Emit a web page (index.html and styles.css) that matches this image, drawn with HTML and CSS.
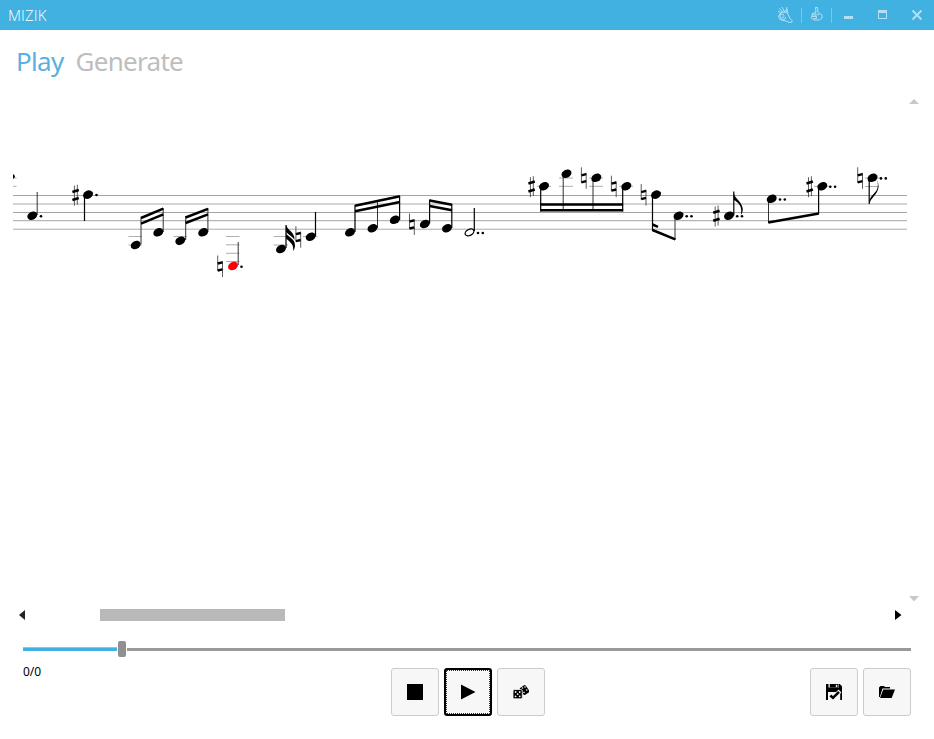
FILE: index.html
```html
<!DOCTYPE html>
<html lang="en">
<head>
<meta charset="utf-8">
<title>MIZIK</title>
<link rel="stylesheet" href="styles.css">
</head>
<body>
<div class="window">
  <header class="titlebar">
    <span class="app-name">MIZIK</span>
    <div class="commands">
      <svg class="cmd" width="30" height="30" viewBox="0 0 30 30"><g fill="none" stroke="currentColor" stroke-width="1"><path d="M8 8.500l4 3.500M11 7l2.500 5M16 7l-1 5M7 11.500l4 1M8 14.500l4-2.500 4 .5 3 6 2 2v1.500l-2 .5-6-2-4-1-1.500-2.500 1-3"/><circle cx="11" cy="16" r="2"/><path d="M9 19l4 1 2-3M13 12l3-3 1 4"/></g></svg>
      <i class="sep"></i>
      <svg class="cmd" width="29" height="30" viewBox="0 0 29 30"><path fill="none" stroke="currentColor" d="M13.500 7.500l.5 5-3.500 1-.5 2-.5 2.500 2 2h6l2.500-2v-3l-4-2.500-.5-5zM10 14h4v2h-4M10.500 16.500h4v2h-3M15 14l2 1"/></svg>
      <i class="sep"></i>
      <svg width="102" height="30" viewBox="0 0 102 30"><path fill="currentColor" d="M12 16h9v3h-9zM46 10h9v9h-9zM47 13v5h7v-5z" fill-rule="evenodd"/><path d="M80.500 10.500l9 9m0-9l-9 9" stroke="currentColor" stroke-width="2"/></svg>
    </div>
  </header>
  <nav class="tabs"><a class="tab active">Play</a><a class="tab">Generate</a></nav>
  <main class="score">
    <svg class="sheet" width="894" height="510" viewBox="13 95 894 510">
      <defs>
        <ellipse id="n" rx="5.200" ry="4" transform="rotate(-27)"/>
        <g id="sh"><path d="M-1.300-9v20M1.600-10v20" stroke="#333" stroke-width=".8"/><path d="M-3.300-2.700l6.400-2M-3.300 5.300l6.400-2" stroke="#000" stroke-width="2.500"/></g>
        <g id="na"><path d="M-2.300-10.500v15.500M2.500-5v16" stroke="#333" stroke-width=".8"/><path d="M-2.300-2.500l4.800-1.200M-2.300 4.500l4.800-1.200" stroke="#000" stroke-width="2.400"/></g>
        <g id="dd"><circle r="1.300"/><circle cx="4.800" r="1.300"/></g>
      </defs>
      <g class="staff"><path d="M13 195.500h894M13 212.500h894"/><path class="soft" d="M13 204h894M13 229.200h894"/><path d="M13 220.700h894"/></g>
      <path class="ledger" d="M13 178h3.500M13 186.300h3.500M128.500 236.500h13.500M128.500 245h13.500M173.500 236.500h13.500M226 236.500h13.500M226 244.800h13.500M226 253.300h13.500M226 261.500h13.500M273.500 236.500h14.500M273.500 245h14.500M303 236.500h14.500M537 186.300h14M559 178h14M559 186.300h14M589 178h14M589 186.300h14M619 186.300h14M814 186.300h15M865 178h15M865 186.500h14"/>
      <path class="stem thin" d="M37.200 192v23M141 217v27M163.200 208v24M185.700 216v24M207.900 208v24M238.200 242v23M377.500 200v28M563.200 174v37M593 178v33M675 216v24M768.500 199v24"/>
      <path class="stem" d="M84.500 195v26M286 225v23M315.500 212v24M355 205v27M399.600 196v24M429.600 199.500v24M451.800 204v24M474.300 208v23M540.700 186v25.500M622.700 186v25.500M652.500 195v36M733.800 191.500v24M818.600 186v28M869.200 178v26"/>
      <path class="beam" d="M141 218l22.300-9.300M141 223.700l22.300-9.300M185.600 217.500l22.400-8.700M185.600 223l22.400-8.700M355 205.700l45-9.500M355 211.300l45-9.300M429.600 200.500l22.400 4.200M429.600 205.900l22.400 4.400M540.300 204.500h82.800M540.300 210.300h82.800M652.500 230l22.800 9.300M652.500 224.500l5.500 2.300M768.300 222.500l50.500-9"/>
      <g class="flags"><path d="M286 225c2 6 9 7 8.500 15-1-3-6-5-8.500-8z"/><path d="M286 233.500c3 4 9 5 9 12 0 2.500-1 4.500-2 5.500 1.500-6-3-9-7-12.500z"/><path d="M733.800 193c1 6 8 8 9 16 0 3-1 5-2 6 2-9-3-13-7-15z"/><path d="M869.200 203c0-7 6-9 8-14 1-3 1-6-.5-9 3 5 2 10-1 14-2 3-5 5-6 9z"/></g>
      <g>
        <use href="#n" x="32.300" y="215.700"/><use href="#n" x="88" y="194.600"/><use href="#n" x="135.700" y="245"/><use href="#n" x="158.300" y="232.300"/><use href="#n" x="180.300" y="240.700"/><use href="#n" x="203.200" y="232.300"/><use class="playing" href="#n" x="233" y="266"/><use href="#n" x="281" y="249"/><use href="#n" x="310.700" y="236.700"/><use href="#n" x="350" y="232.300"/><use href="#n" x="372.500" y="228.200"/><use href="#n" x="394.800" y="219.800"/><use href="#n" x="424.800" y="224"/><use href="#n" x="447" y="228.200"/><use href="#n" x="544" y="186.200"/><use href="#n" x="566.500" y="173.700"/><use href="#n" x="596.300" y="177.800"/><use href="#n" x="626.300" y="186.200"/><use href="#n" x="656" y="194.600"/><use href="#n" x="678.500" y="215.700"/><use href="#n" x="729" y="215.700"/><use href="#n" x="771.700" y="198.800"/><use href="#n" x="822.300" y="186.200"/><use href="#n" x="872.500" y="177.800"/>
        <ellipse cx="469.500" cy="232.400" rx="4.700" ry="3" class="half" transform="rotate(-27 469.500 232.400)"/>
        <path d="M13 174q2 1 2 3l-2 2z"/>
      </g>
      <use href="#sh" x="75.700" y="194.700"/><use href="#sh" x="531.700" y="186.200"/><use href="#sh" x="716.500" y="215.500"/><use href="#sh" x="809.800" y="186.200"/>
      <use href="#na" x="220" y="266"/><use href="#na" x="298.200" y="236.700"/><use href="#na" x="411.800" y="224"/><use href="#na" x="583.700" y="177.800"/><use href="#na" x="613.700" y="186.200"/><use href="#na" x="643.500" y="194.600"/><use href="#na" x="860" y="177.800"/>
      <circle cx="41" cy="216.300" r="1.300"/><circle cx="96.500" cy="195" r="1.300"/><circle cx="241.500" cy="266.700" r="1.300"/>
      <use href="#dd" x="478" y="233"/><use href="#dd" x="686.700" y="216.300"/><use href="#dd" x="737.200" y="216.300"/><use href="#dd" x="780" y="199.500"/><use href="#dd" x="830.300" y="186.700"/><use href="#dd" x="881" y="178.400"/>
    </svg>
    <div class="vscroll"><svg width="10" height="5"><path d="M0 5l5-5 5 5z"/></svg><svg width="10" height="6"><path d="M0 0h10l-5 5.500z"/></svg></div>
  </main>
  <div class="hscroll">
    <svg width="7" height="10"><path fill="#222" d="M6 0v10l-6-5z"/></svg>
    <div class="track"><div class="thumb"></div></div>
    <svg width="7" height="10"><path d="M0 0v10l6.500-5z"/></svg>
  </div>
  <div class="slider"><div class="filled"></div><div class="knob"></div><div class="rest"></div></div>
  <footer class="controls">
    <span class="time">0/0</span>
    <div class="group">
      <button class="btn" aria-label="Stop"><svg width="16" height="16"><path d="M0 0h16v16H0z"/></svg></button>
      <button class="btn focused" aria-label="Play"><svg width="16" height="16"><path d="M1 0.500l14.500 7.500L1 15.500z"/></svg></button>
      <button class="btn" aria-label="Random"><svg width="16" height="16" viewBox="0 0 16 16"><rect x="8" y="1.800" width="7" height="8.500" rx="1.500" transform="rotate(-35 11.500 6)"/><rect x="0" y="5.500" width="9.300" height="9.300" rx="1.500" stroke="#f7f7f7" stroke-width=".8"/><g fill="#f7f7f7"><circle cx="2.600" cy="8" r=".9"/><circle cx="6.700" cy="8" r=".9"/><circle cx="4.700" cy="10.100" r=".9"/><circle cx="2.600" cy="12.300" r=".9"/><circle cx="6.700" cy="12.300" r=".9"/><circle cx="9.500" cy="4" r=".8"/><circle cx="12" cy="3" r=".8"/><circle cx="13.700" cy="6" r=".8"/><circle cx="11" cy="8.500" r=".8"/></g></svg></button>
    </div>
    <div class="group end">
      <button class="btn" aria-label="Save"><svg width="16" height="16" viewBox="0 0 16 16"><path fill-rule="evenodd" d="M0 0h2.500v3.500H13V0h.8L16 2.200V16h-1.800V8H2v8H0z"/><path fill-rule="evenodd" d="M3.800 0h8.700v3.500H3.800zM9.800.7v2.200h1.500V.7z"/><path d="M4 11l3 2.700 7-6.700" fill="none" stroke="#f7f7f7" stroke-width="4"/><path d="M4.300 11.500l2.700 2.300 6-6" fill="none" stroke="#000" stroke-width="2.600"/></svg></button>
      <button class="btn" aria-label="Open"><svg width="17" height="12"><path d="M0 11V1.500L1.500 0H5l1 1h5v1.500H3.500L.8 11zM4.300 3.500H16L12.700 12H1z"/></svg></button>
    </div>
  </footer>
</div>
</body>
</html>
```
FILE: styles.css
```css
* { box-sizing: border-box; }
body { margin: 0; background: #fff; font-family: "Open Sans", "Noto Sans", sans-serif; }
svg { display: block; flex: none; }
.window { width: 934px; height: 739px; display: flex; flex-direction: column; overflow: hidden; }
.titlebar { height: 30px; background: #41b1e1; display: flex; align-items: center; justify-content: space-between; padding-left: 8px; }
.app-name { color: #fff; font-size: 15px; font-weight: 300; letter-spacing: .15px; line-height: 30px; }
.commands { display: flex; align-items: center; color: #b3dff3; }
.sep { width: 1px; height: 15px; background: #78c8ea; }
.tabs { height: 65px; padding: 11px 16px 0; display: flex; gap: 12px; font-family: "Noto Sans", sans-serif; font-size: 26px; line-height: 40px; }
.tab { color: #bebebe; letter-spacing: -.7px; }
.tab.active { color: #5bb0e0; }
.score { height: 510px; display: flex; padding-left: 13px; }
.staff { stroke: #a3a3a3; stroke-width: 1; }
.staff .soft { stroke: #aaa; }
.ledger { stroke: #999; stroke-width: .8; }
.stem { stroke: #000; stroke-width: 1.2; }
.stem.thin { stroke: #333; stroke-width: 1; }
.beam { stroke: #000; stroke-width: 2.500; }
.playing { fill: #f00; }
.half { fill: #fff; stroke: #000; stroke-width: 1.300; }
.vscroll { width: 14px; padding: 4px 0 3px 2px; display: flex; flex-direction: column; justify-content: space-between; fill: #c8c8c8; }
.hscroll { height: 20px; padding: 0 32px 0 19px; display: flex; align-items: center; }
.track { flex: 1; padding-left: 74px; }
.thumb { width: 185px; height: 12px; background: #b9b9b9; }
.slider { height: 48px; padding: 0 23px; display: flex; align-items: center; }
.filled { width: 94px; height: 4px; background: #41b1e1; border: solid #7dcaeb; border-width: 1px 0 0; }
.knob { width: 8px; height: 16px; margin: 0 1px; background: #909090; border-radius: 2px; }
.rest { flex: 1; height: 3px; background: #999; }
.controls { height: 66px; padding: 0 23px; display: grid; grid-template-columns: 368px 1fr auto; align-items: start; }
.time { font-family: "Noto Sans", sans-serif; font-size: 12px; line-height: 16px; margin-top: -9px; }
.group { display: flex; gap: 5px; margin-top: -5px; }
.btn { width: 48px; height: 48px; padding: 0; border: 1px solid #ccc; border-radius: 3px; background: #f7f7f7; display: flex; align-items: center; justify-content: center; }
.btn.focused { border: 2px solid #000; outline: 1px dotted #333; outline-offset: -3px; }
```
